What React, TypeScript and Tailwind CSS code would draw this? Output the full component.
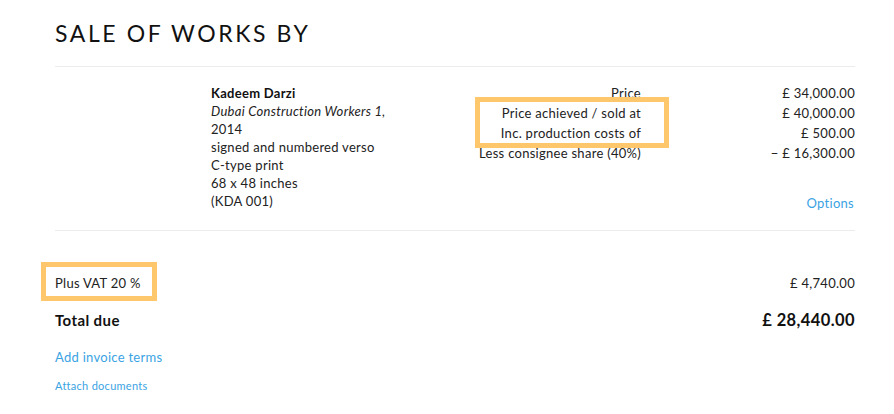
import React from "react";

const font = { fontFamily: "Lato, 'Open Sans', sans-serif" };

function Highlight({ children, className }: { children: React.ReactNode; className: string }) {
  return (
    <div className="relative">
      {children}
      <span aria-hidden className={`pointer-events-none absolute border-[5px] border-[#fec76b] ${className}`} />
    </div>
  );
}

export default function App() {
  return (
    <div className="w-[894px] h-[414px] bg-white text-[#222] pl-[55px] pr-[39px] tracking-[0.28px]" style={font}>
      <h1 className="pt-[19px] text-[23px] leading-[28px] tracking-[2.6px] text-[#111]">SALE OF WORKS BY</h1>

      <div className="mt-[19px] border-t border-[#ececec]" />

      <div className="flex pt-[17px] pb-[17px] text-[13px]">
        <div className="ml-[156px] w-[190px] leading-[18px]">
          <div className="font-bold text-[#111]">Kadeem Darzi</div>
          <div className="italic">Dubai Construction Workers 1,</div>
          <div>2014</div>
          <div>signed and numbered verso</div>
          <div>C-type print</div>
          <div>68 x 48 inches</div>
          <div>(KDA 001)</div>
        </div>

        <div className="flex-1 text-right leading-[20px] -mt-[1px]">
          <div>Price</div>
          <Highlight className="-right-[28px] -top-[6px] -bottom-[5px] w-[194px]">
            <div>Price achieved / sold at</div>
            <div>Inc. production costs of</div>
          </Highlight>
          <div>Less consignee share (40%)</div>
        </div>

        <div className="w-[214px] flex flex-col items-end leading-[20px] -mt-[1px]">
          <div>£ 34,000.00</div>
          <div>£ 40,000.00</div>
          <div>£ 500.00</div>
          <div>− £ 16,300.00</div>
          <div className="mt-[30px] text-[#3aa3e3] pr-[1px]">Options</div>
        </div>
      </div>

      <div className="border-t border-[#ececec]" />

      <div className="mt-[42px] flex items-center justify-between text-[13px] leading-[20px]">
        <Highlight className="-left-[14px] -top-[11px] -bottom-[8px] w-[116px]">
          <div>Plus VAT 20 %</div>
        </Highlight>
        <div>£ 4,740.00</div>
      </div>

      <div className="mt-[17px] flex items-center justify-between font-bold text-[#111] leading-[20px] tracking-[0.4px]">
        <div className="text-[15px]">Total due</div>
        <div className="text-[16.5px]">£ 28,440.00</div>
      </div>

      <div className="mt-[17px] text-[13px] leading-[20px] text-[#3aa3e3]">Add invoice terms</div>
      <div className="mt-[11px] text-[11px] leading-[16px] text-[#3aa3e3]">Attach documents</div>
    </div>
  );
}
